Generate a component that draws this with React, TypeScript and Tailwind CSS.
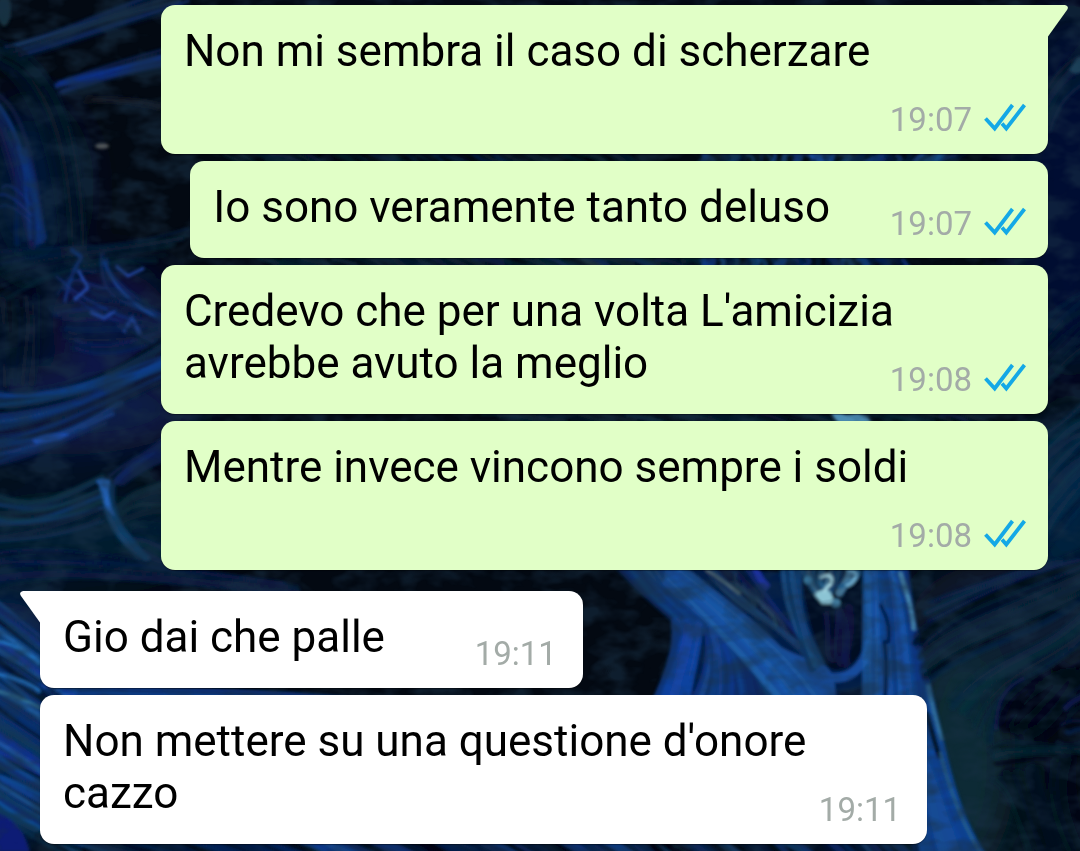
import { clsx } from 'clsx';

type Message = {
  id: number;
  text: string;
  time: string;
  outgoing: boolean;
  first?: boolean;
};

const messages: Message[] = [
  { id: 1, text: 'Non mi sembra il caso di scherzare', time: '19:07', outgoing: true, first: true },
  { id: 2, text: 'Io sono veramente tanto deluso', time: '19:07', outgoing: true },
  { id: 3, text: "Credevo che per una volta L'amicizia avrebbe avuto la meglio", time: '19:08', outgoing: true },
  { id: 4, text: 'Mentre invece vincono sempre i soldi', time: '19:08', outgoing: true },
  { id: 5, text: 'Gio dai che palle', time: '19:11', outgoing: false, first: true },
  { id: 6, text: "Non mettere su una questione d'onore cazzo", time: '19:11', outgoing: false },
];

function seededRand(seed: number) {
  let s = seed;
  return () => {
    s = (s * 9301 + 49297) % 233280;
    return s / 233280;
  };
}

type StrandProps = {
  // two cubic curves (x1 y1 c1 c1 c2 c2 x2 y2); strands fill the space between
  from: number[];
  to: number[];
  count: number;
  colors: string[];
  width?: number;
  opacity?: number;
  seed?: number;
};

function Strands({ from, to, count, colors, width = 3, opacity = 0.7, seed = 7 }: StrandProps) {
  const rand = seededRand(seed * 977);
  return (
    <g fill="none" strokeLinecap="round">
      {Array.from({ length: count }, (_, i) => {
        const t = count > 1 ? i / (count - 1) : 0;
        const p = from.map((v, k) => Math.round(v + (to[k] - v) * t + (rand() - 0.5) * 9));
        return (
          <path
            key={i}
            d={`M${p[0]} ${p[1]}C${p[2]} ${p[3]} ${p[4]} ${p[5]} ${p[6]} ${p[7]}`}
            stroke={colors[Math.floor(rand() * colors.length)]}
            strokeWidth={width * (0.5 + rand())}
            opacity={opacity * (0.5 + rand() * 0.5)}
          />
        );
      })}
    </g>
  );
}

const NAVY = ['#0b2252', '#0d3070', '#071633', '#14427e', '#0a2a48', '#040c1e'];
const BLUE = ['#0d3c96', '#164fae', '#0a2b70', '#1a5a9e', '#061a44'];
const TEAL = ['#0a2638', '#0c3040', '#071b33', '#0d2450', '#102a3c'];

function Wallpaper() {
  return (
    <svg
      className="absolute inset-0 h-full w-full"
      viewBox="0 0 1080 851"
      preserveAspectRatio="xMidYMid slice"
      aria-hidden="true"
    >
      <defs>
        <filter id="soft" x="-5%" y="-5%" width="110%" height="110%">
          <feGaussianBlur stdDeviation="1.5" />
        </filter>
        <filter id="haze" x="-30%" y="-30%" width="160%" height="160%">
          <feGaussianBlur stdDeviation="22" />
        </filter>
        {/* Uneven dark paint over everything */}
        <filter id="mottle" x="0" y="0" width="100%" height="100%">
          <feTurbulence type="fractalNoise" baseFrequency="0.03 0.05" numOctaves="3" seed="4" />
          <feColorMatrix values="0 0 0 0 0.01  0 0 0 0 0.03  0 0 0 0 0.06  3 0 0 0 -1.2" />
        </filter>
      </defs>
      <rect width="1080" height="851" fill="#030912" />

      {/* Broad patches of colour */}
      <g filter="url(#haze)">
        <ellipse cx="60" cy="410" rx="140" ry="45" fill="#071d48" />
        <ellipse cx="30" cy="190" rx="50" ry="90" fill="#061436" />
        <ellipse cx="110" cy="320" rx="60" ry="50" fill="#07194a" />
        <ellipse cx="70" cy="535" rx="130" ry="42" fill="#061d30" />
        <ellipse cx="0" cy="720" rx="80" ry="120" fill="#08306c" />
        <ellipse cx="1070" cy="190" rx="60" ry="190" fill="#040f30" />
        <ellipse cx="1070" cy="500" rx="54" ry="80" fill="#062040" />
        <ellipse cx="1010" cy="620" rx="100" ry="60" fill="#071f30" />
        <ellipse cx="960" cy="760" rx="56" ry="120" fill="#082a34" />
      </g>

      <g filter="url(#soft)">
        {/* Upper left beams */}
        <Strands from={[10, 45, 60, 30, 110, 12, 170, -14]} to={[20, 58, 70, 42, 120, 24, 190, 8]} count={9} colors={['#0b2458', '#12357a', '#24486e', '#091a40']} seed={3} />
        <Strands from={[56, 84, 90, 72, 130, 62, 180, 48]} to={[60, 90, 95, 80, 135, 70, 180, 60]} count={8} colors={['#103089', '#1540a4', '#0a2166']} width={4} opacity={0.8} seed={11} />
        <Strands from={[84, 98, 110, 98, 130, 96, 170, 104]} to={[90, 104, 110, 102, 130, 102, 160, 108]} count={3} colors={['#1a1c26']} width={4} opacity={0.5} seed={12} />
        <ellipse cx="102" cy="146" rx="7" ry="3" fill="#4d5357" />
        <ellipse cx="4" cy="10" rx="7" ry="16" fill="#123340" />

        {/* Arched shapes */}
        <Strands from={[-6, 44, 50, 50, 84, 110, 86, 250]} to={[-10, 62, 30, 70, 56, 140, 62, 250]} count={9} colors={['#081828', '#0a1f2a', '#071224', '#0c1a34']} width={6} opacity={0.7} seed={21} />
        <Strands from={[-6, 90, 22, 110, 34, 170, 46, 240]} to={[-10, 110, 8, 150, 22, 200, 34, 246]} count={8} colors={['#0b2358', '#0a1a44', '#12387a', '#161e50']} width={5} seed={31} />
        <Strands from={[12, 140, 18, 170, 16, 200, 20, 240]} to={[26, 150, 34, 180, 38, 210, 42, 244]} count={5} colors={['#12388c', '#0a2058']} width={4} seed={32} />
        <Strands from={[0, 190, 12, 180, 22, 200, 36, 208]} to={[0, 206, 10, 200, 24, 214, 34, 222]} count={3} colors={['#1b3a99']} width={2} seed={33} />

        {/* Tangle in the middle left */}
        <Strands from={[0, 250, 50, 240, 100, 256, 192, 226]} to={[0, 300, 50, 268, 90, 262, 160, 258]} count={10} colors={TEAL} width={3} opacity={0.5} seed={41} />
        <Strands from={[50, 304, 80, 300, 120, 290, 166, 318]} to={[76, 350, 100, 358, 130, 352, 166, 334]} count={16} colors={['#0b2262', '#12307c', '#141e58', '#0a1a3c', '#091430']} width={6} seed={53} />
        <Strands from={[62, 300, 78, 240, 90, 262, 74, 246]} to={[60, 278, 76, 300, 90, 312, 140, 330]} count={7} colors={['#16409a', '#1a3484', '#0b2458']} width={3} seed={51} />
        <Strands from={[98, 256, 98, 290, 118, 300, 160, 316]} to={[108, 262, 112, 280, 134, 300, 164, 322]} count={5} colors={['#1f57b4', '#163f92', '#0c2c6c']} width={3} seed={52} />
        <path d="M78 270l10 18-14 12M116 266l12 10 16-8M90 312l14 6 12-8M124 332l8-14 8 16" fill="none" stroke="#2348a6" strokeWidth="3" />
        <Strands from={[0, 300, 4, 330, 2, 350, 0, 390]} to={[40, 300, 40, 330, 36, 350, 34, 380]} count={8} colors={['#061226', '#0b1830', '#0c1520']} width={6} seed={54} />
        <Strands from={[110, 300, 130, 300, 150, 310, 170, 316]} to={[126, 330, 140, 340, 150, 350, 170, 350]} count={6} colors={NAVY} width={4} seed={55} />

        {/* Long waves */}
        <Strands from={[-8, 396, 50, 400, 110, 384, 170, 340]} to={[-8, 446, 60, 436, 110, 404, 170, 376]} count={26} colors={NAVY} width={5} opacity={1} seed={61} />
        <Strands from={[-8, 394, 50, 400, 110, 378, 170, 352]} to={[-8, 404, 60, 402, 110, 386, 170, 364]} count={4} colors={['#134596', '#154c92']} width={3} seed={60} />
        <Strands from={[-8, 446, 40, 440, 70, 430, 120, 404]} to={[-8, 466, 30, 456, 60, 446, 100, 424]} count={8} colors={['#0f3a94', '#0a2459', '#173f80']} width={3} seed={62} />
        <path d="M32 440q16-8 38-6l-10 6-24 4z" fill="#1b4fb4" />
        <Strands from={[112, 476, 130, 456, 150, 448, 170, 436]} to={[124, 484, 140, 470, 156, 460, 170, 454]} count={7} colors={['#15307f', '#1c3c9a', '#0b2050']} width={5} seed={64} />
        <Strands from={[-8, 498, 40, 512, 60, 500, 104, 480]} to={[-8, 540, 30, 538, 60, 534, 100, 520]} count={16} colors={['#0b2f50', '#123a6e', '#0a2240', '#0e3c4c', '#081a2c']} width={4} opacity={0.9} seed={71} />
        <Strands from={[114, 510, 130, 490, 150, 486, 170, 480]} to={[128, 548, 140, 546, 150, 556, 170, 570]} count={12} colors={TEAL} width={5} seed={73} />
        <Strands from={[100, 486, 108, 520, 118, 540, 144, 562]} to={[110, 484, 112, 516, 124, 532, 146, 552]} count={6} colors={['#123c68', '#0f3554', '#174c7c']} width={5} seed={72} />
        <path d="M96 481q8-4 15-1-3 8-2 16 2 14 6 20-8-4-11-14-2-14-8-21z" fill="#2361b4" />
        <Strands from={[-8, 556, 60, 540, 130, 560, 280, 586]} to={[-8, 586, 60, 570, 130, 578, 300, 592]} count={12} colors={['#071a33', '#091b3c', '#050e18', '#0a1a50']} width={5} seed={74} />

        {/* Lower left sweep, also seen in the gaps between messages */}
        <Strands from={[-10, 600, 10, 610, 34, 632, 70, 660]} to={[-10, 810, 10, 822, 40, 840, 80, 862]} count={52} colors={['#0f469c', '#0a2b70', '#2064a8', '#061a44', '#030a18', '#14349a', '#0b3a60', '#10509a']} width={4} opacity={1} seed={81} />
        <path d="M-10 640c20 2 38 12 50 24M-10 672c18 4 40 10 50 20" fill="none" stroke="#2270bc" strokeWidth="3" />
        <path d="M-10 690c20 2 38 12 50 18" fill="none" stroke="#3c88a8" strokeWidth="2" />
        <path d="M-4 812c16 6 28 16 34 40h-34z" fill="#0a1e74" />
        <Strands from={[40, 682, 160, 690, 240, 690, 330, 696]} to={[60, 694, 160, 696, 240, 700, 420, 704]} count={7} colors={BLUE} seed={82} />
        <Strands from={[40, 836, 60, 840, 90, 850, 120, 860]} to={[880, 830, 890, 838, 900, 848, 910, 860]} count={80} colors={[...BLUE, '#040a18']} width={7} seed={83} />

        {/* Strips between the outgoing messages */}
        <Strands from={[220, 150, 230, 154, 240, 160, 250, 166]} to={[610, 150, 620, 154, 630, 160, 640, 166]} count={30} colors={[...TEAL, '#0a2b70', '#03080f']} width={4} seed={91} />
        <Strands from={[700, 152, 704, 154, 708, 160, 700, 164]} to={[960, 152, 964, 154, 956, 160, 950, 164]} count={32} colors={[...BLUE, '#1d5fc8']} width={6} seed={92} />
        <Strands from={[250, 256, 260, 258, 270, 264, 280, 268]} to={[680, 256, 690, 258, 700, 264, 710, 268]} count={36} colors={[...TEAL, '#123a7c', '#2c4a50']} width={5} seed={93} />
        <Strands from={[700, 256, 706, 258, 704, 264, 700, 268]} to={[900, 256, 904, 258, 906, 264, 910, 268]} count={24} colors={BLUE} width={6} seed={94} />
        <Strands from={[480, 412, 500, 414, 520, 420, 540, 424]} to={[960, 412, 970, 414, 980, 420, 990, 424]} count={24} colors={TEAL} width={4} seed={95} />
        <path d="M830 412h10l6 3 12-2 10 4 4 6h-34z" fill="#4b8bb2" />

        {/* Right edge */}
        <Strands from={[1040, 90, 1052, 80, 1062, 60, 1084, 44]} to={[1046, 130, 1056, 106, 1068, 90, 1084, 80]} count={9} colors={['#0a1f38', '#102c48', '#061226']} width={5} seed={101} />
        <path d="M1069 70l8-12 6-2v16l-8 2z" fill="#1a4058" />
        <Strands from={[1044, 320, 1056, 312, 1066, 300, 1086, 290]} to={[1044, 390, 1056, 378, 1068, 360, 1086, 348]} count={10} colors={['#06122c', '#091a3a', '#0a1e30']} width={4} seed={102} />
        <Strands from={[1040, 440, 1056, 426, 1066, 416, 1086, 406]} to={[1040, 560, 1056, 536, 1066, 516, 1086, 496]} count={20} colors={['#082240', '#0b2c4c', '#061430', '#0d3450']} width={5} seed={103} />

        {/* Robed figure */}
        <path d="M612 560c44 36 58 46 70 74-10 30-18 52-26 76h272l12 40 34 110h-60l-20-100-6-180z" fill="#061a46" />
        <Strands from={[620, 562, 640, 590, 662, 612, 690, 628]} to={[660, 560, 678, 590, 700, 606, 730, 632]} count={14} colors={['#12418c', '#0c3274', '#1a548e', '#0b3370']} width={7} opacity={0.95} seed={111} />
        <Strands from={[680, 624, 680, 650, 668, 680, 658, 708]} to={[700, 624, 700, 650, 690, 680, 682, 708]} count={9} colors={['#1346a4', '#1242a0', '#1a57a8']} width={7} opacity={0.95} seed={112} />
        <Strands from={[704, 626, 710, 654, 704, 680, 694, 708]} to={[740, 640, 760, 660, 770, 690, 780, 708]} count={14} colors={['#0f3a90', '#164a9c', '#0a2c68', '#124070']} width={9} opacity={0.95} seed={113} />
        <path d="M670 568c50 36 96 82 150 94 18 10 16 30 14 48h-50c-30-40-66-78-122-126z" fill="#164a94" />
        <Strands from={[664, 574, 700, 606, 750, 660, 790, 712]} to={[680, 566, 730, 606, 790, 650, 826, 708]} count={16} colors={['#1c5bb0', '#154c9c', '#103c86', '#2466aa']} width={6} seed={114} />
        <Strands from={[696, 560, 730, 600, 764, 620, 802, 650]} to={[740, 560, 766, 600, 790, 620, 812, 644]} count={13} colors={['#0a1c50', '#061230', '#1b4266', '#0e2b78', '#162c50']} width={6} opacity={0.95} seed={115} />
        <Strands from={[732, 576, 736, 588, 746, 590, 752, 598]} to={[764, 604, 772, 614, 780, 620, 786, 634]} count={9} colors={['#31586c', '#1d3f68', '#263a60']} width={3} seed={116} />
        <path d="M706 570c10 6 24 16 34 24" fill="none" stroke="#5c7478" strokeWidth="2" />
        <path d="M752 562c4 10 10 20 16 26" fill="none" stroke="#1a30a4" strokeWidth="7" />
        <Strands from={[782, 560, 782, 594, 794, 630, 814, 664]} to={[798, 560, 798, 594, 804, 630, 820, 664]} count={8} colors={['#124078', '#1b558c', '#0d3262']} width={6} opacity={0.95} seed={117} />

        {/* Hollow under the pale cluster */}
        <path d="M802 566c0 40 16 86 24 100 14 10 32-2 36-18 6-26 2-54 0-84z" fill="#040a22" />
        <Strands from={[824, 616, 826, 634, 828, 654, 832, 664]} to={[848, 610, 852, 634, 850, 654, 848, 662]} count={6} colors={['#0a2366', '#0b2a50', '#121a50']} width={6} seed={118} />
        <path d="M820 676c30 8 46-8 52-42" fill="none" stroke="#174b9c" strokeWidth="9" />
        <path d="M838 692c16-2 26-4 32-12v16l-28 4z" fill="#040c28" />

        {/* Right fold of the robe */}
        <path d="M864 560h40c10 60 26 120 42 190 8 34 18 70 40 104h-66l-16-100c-20-60-30-120-40-194z" fill="#114594" />
        <Strands from={[866, 560, 870, 610, 866, 660, 868, 712]} to={[900, 560, 910, 610, 920, 660, 926, 712]} count={18} colors={['#1a58a8', '#1350a4', '#0f3a80', '#1f60ac', '#0c347c']} width={7} opacity={0.9} seed={119} />
        <path d="M880 604c8 14 10 24 8 40M884 640c4 20 2 40 0 70" fill="none" stroke="#061a48" strokeWidth="4" />
        <path d="M900 572c6 20 12 32 14 58" fill="none" stroke="#4585ae" strokeWidth="4" />
        <path d="M928 684c4 24 8 36 14 56" fill="none" stroke="#2e6c98" strokeWidth="4" />
        <path d="M926 712c6 18 8 30 14 46" fill="none" stroke="#02081c" strokeWidth="5" />
        <Strands from={[918, 730, 924, 770, 930, 810, 938, 856]} to={[932, 754, 942, 780, 954, 820, 974, 856]} count={9} colors={['#10459c', '#0d3a88', '#174f94']} width={8} seed={120} />
        <path d="M940 752c10 40 22 72 42 104" fill="none" stroke="#2b6484" strokeWidth="2" />

        {/* Pale cluster */}
        <Strands from={[806, 566, 800, 578, 810, 590, 820, 594]} to={[856, 566, 862, 572, 850, 584, 842, 590]} count={12} colors={['#1f5a88', '#2c6f9a', '#123a66', '#5b97b6']} width={5} opacity={0.95} seed={130} />
        <path d="M814 594c6-4 12-6 16-2l4 8-2 4-10 0z" fill="#8cc4d4" />
        <path d="M820 578c4-4 12-4 12 2s-6 6-8 12" fill="none" stroke="#a3d3df" strokeWidth="3" />
        <path d="M848 570c6 0 10 4 6 10s-6 4-8 6" fill="none" stroke="#69a6c8" strokeWidth="4" />
        <circle cx="836" cy="603" r="4" fill="#4d92b8" />
        <circle cx="808" cy="580" r="4" fill="#3b7ea6" />

        {/* Lower right folds */}
        <Strands from={[918, 640, 940, 610, 990, 590, 1086, 556]} to={[930, 680, 980, 640, 1020, 640, 1086, 600]} count={18} colors={['#071c30', '#0a2838', '#061430', '#0a2048', '#030914']} width={8} opacity={0.8} seed={141} />
        <Strands from={[930, 600, 960, 586, 1000, 576, 1040, 566]} to={[930, 620, 960, 606, 1000, 580, 1086, 560]} count={5} colors={['#0a1c58', '#08164a', '#0c2c50']} width={4} seed={142} />
        <Strands from={[950, 700, 1000, 650, 1040, 660, 1086, 612]} to={[990, 740, 990, 690, 1040, 680, 1086, 640]} count={10} colors={TEAL} width={6} opacity={0.5} seed={143} />
        <Strands from={[1000, 724, 1004, 694, 1020, 684, 1050, 678]} to={[1030, 734, 1050, 736, 1070, 710, 1084, 668]} count={10} colors={['#050816', '#0a0a14', '#060c24']} width={12} opacity={0.8} seed={147} />
        <path d="M996 730c0-30 10-44 28-52" fill="none" stroke="#11185a" strokeWidth="3" opacity="0.7" />
        <Strands from={[1068, 700, 1074, 690, 1080, 690, 1086, 684]} to={[1062, 744, 1072, 746, 1080, 740, 1086, 742]} count={6} colors={['#0b1a5a', '#0d2266', '#071030']} width={4} seed={144} />
        <Strands from={[990, 748, 1010, 736, 1040, 750, 1086, 750]} to={[998, 764, 1010, 766, 1040, 752, 1060, 762]} count={6} colors={['#0a2838', '#02060c', '#082030']} width={5} seed={145} />
        <Strands from={[994, 780, 1010, 790, 1020, 820, 1030, 856]} to={[1070, 760, 1060, 790, 1070, 820, 1086, 856]} count={14} colors={['#040a14', '#0a1c24', '#060e28', '#02060c']} width={12} opacity={0.6} seed={146} />
      </g>
      <rect width="1080" height="851" filter="url(#mottle)" opacity="0.55" />
    </svg>
  );
}

function DoubleCheck() {
  return (
    <svg
      className="mb-2 h-[30px] w-[42px]"
      viewBox="0 0 42 30"
      fill="none"
      stroke="#14a8e6"
      strokeWidth="3.8"
      role="img"
      aria-label="Read"
    >
      <path d="M1.5 16.5L10.7 26.5L28.5 3" />
      <path d="M18 21.5L22.3 26.5L40.5 3" />
    </svg>
  );
}

function Tail({ outgoing }: { outgoing: boolean }) {
  return (
    <svg
      className={clsx(
        'absolute top-0 h-8 w-[22px]',
        outgoing ? '-right-5 text-[#e1ffc7]' : '-left-5 -scale-x-100 text-white',
      )}
      viewBox="0 0 22 32"
      fill="currentColor"
      aria-hidden="true"
    >
      <path d="M0 0H19Q23.500 1 21 5L2 31.500H0Z" />
    </svg>
  );
}

function Bubble({ message }: { message: Message }) {
  const { text, time, outgoing, first } = message;
  return (
    <li
      className={clsx(
        'relative w-fit max-w-[88%] rounded-[14px] pt-5 pb-[25px] pl-[23px] shadow-[0_1px_1px_rgba(0,0,0,0.4)]',
        outgoing ? 'self-end bg-[#e1ffc7] pr-6' : 'self-start bg-white pr-7',
        first && (outgoing ? 'rounded-tr-none' : 'rounded-tl-none'),
        first && !outgoing && 'mt-[14px]',
      )}
    >
      {first && <Tail outgoing={outgoing} />}
      <p className="text-[44px] leading-[52px] text-black">
        {text}
        {/* Keeps room for the time on the last line */}
        <span className={clsx('inline-block h-1', outgoing ? 'w-[194px]' : 'w-[170px]')} />
      </p>
      <div className={clsx('absolute bottom-[14px] flex items-end gap-3', outgoing ? 'right-[22px]' : 'right-[26px]')}>
        <time className="text-[33px] leading-10 text-[#a3aba7]">{time}</time>
        {outgoing && <DoubleCheck />}
      </div>
    </li>
  );
}

export default function App() {
  return (
    <main className="relative min-h-screen overflow-hidden bg-[#02070f] font-[Roboto,sans-serif]">
      <Wallpaper />
      <ul className="relative flex flex-col gap-[7px] pt-[5px] pr-8 pl-10">
        {messages.map((message) => (
          <Bubble key={message.id} message={message} />
        ))}
      </ul>
    </main>
  );
}
